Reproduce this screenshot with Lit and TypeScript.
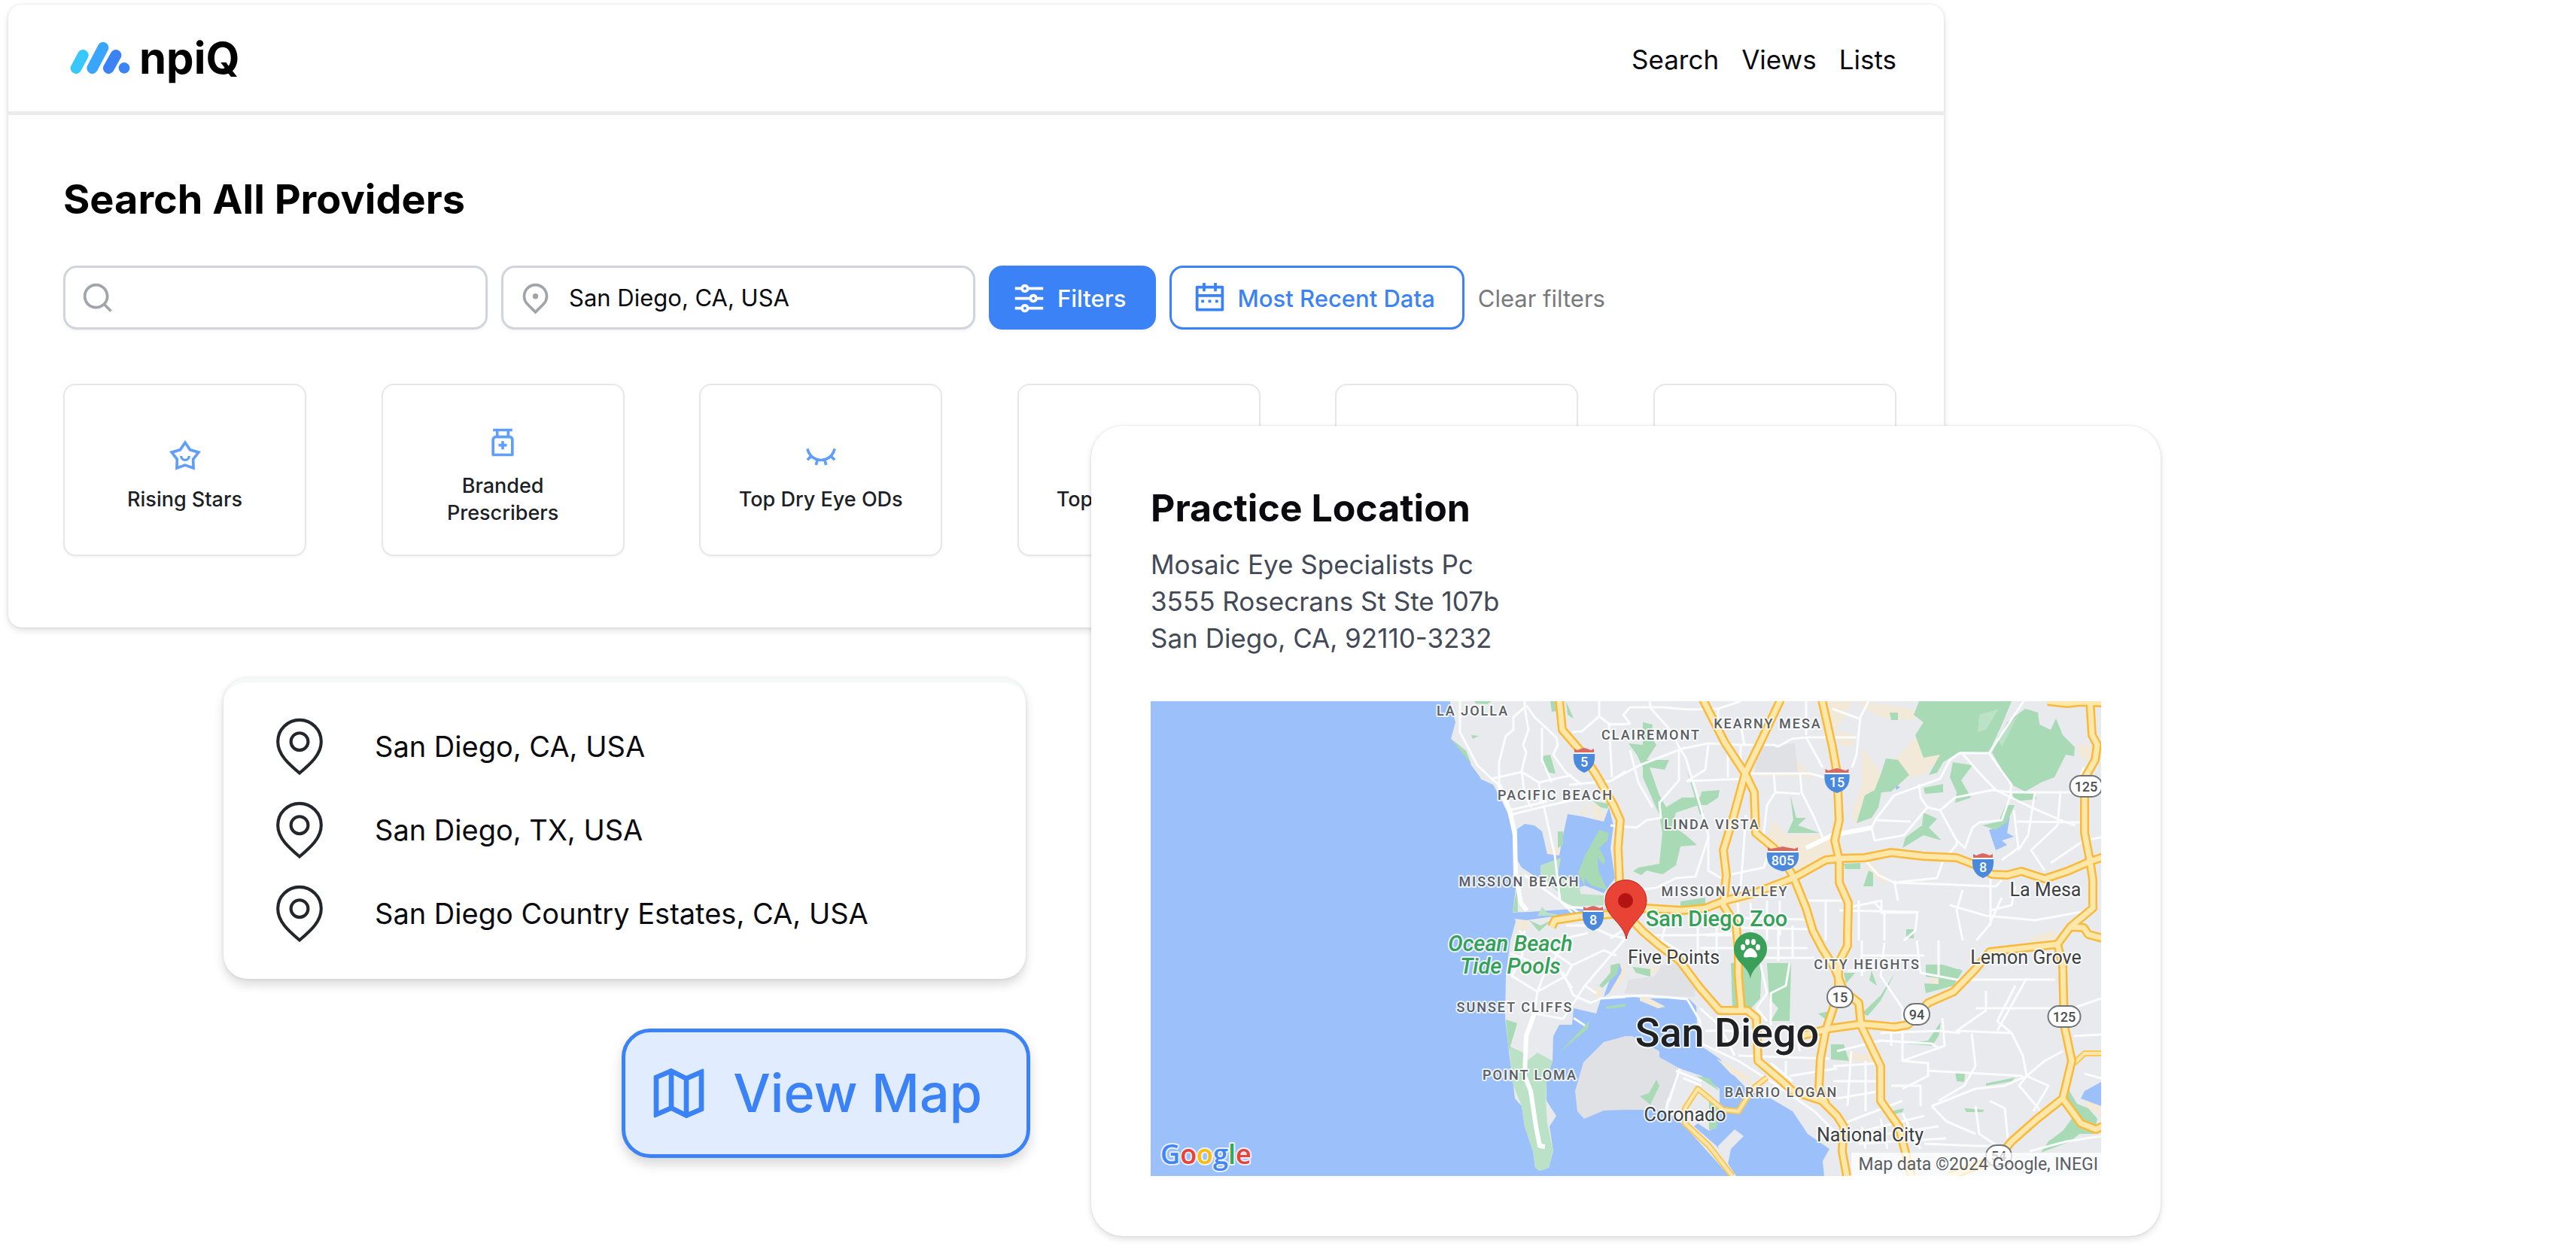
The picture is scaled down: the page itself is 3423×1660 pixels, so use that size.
import { LitElement, html, css, svg } from "lit";
import { customElement } from "lit/decorators.js";

/* ---------- Icons (24-unit grid) ---------- */

const ICONS: Record<string, string> = {
  search:
    "M18.031 16.617l4.283 4.282-1.415 1.415-4.282-4.283A8.96 8.96 0 0 1 11 20c-4.968 0-9-4.032-9-9s4.032-9 9-9 9 4.032 9 9a8.96 8.96 0 0 1-1.969 5.617zm-2.006-.742A6.977 6.977 0 0 0 18 11c0-3.868-3.133-7-7-7-3.868 0-7 3.132-7 7 0 3.867 3.132 7 7 7a6.977 6.977 0 0 0 4.875-1.975l.15-.15z",
  pin: "M12 20.9l4.95-4.95a7 7 0 1 0-9.9 0L12 20.9zm0 2.828l-6.364-6.364a9 9 0 1 1 12.728 0L12 23.728zM12 13a2 2 0 1 1 0-4 2 2 0 0 1 0 4z",
  filters:
    "M6.17 18a3.001 3.001 0 0 1 5.66 0H22v2H11.83a3.001 3.001 0 0 1-5.66 0H2v-2h4.17zm6-7a3.001 3.001 0 0 1 5.66 0H22v2h-4.17a3.001 3.001 0 0 1-5.66 0H2v-2h10.17zm-6-7a3.001 3.001 0 0 1 5.66 0H22v2H11.83a3.001 3.001 0 0 1-5.66 0H2V4h4.17zM9 6a1 1 0 1 0 0-2 1 1 0 0 0 0 2zm6 7a1 1 0 1 0 0-2 1 1 0 0 0 0 2zm-6 7a1 1 0 1 0 0-2 1 1 0 0 0 0 2z",
  calendar:
    "M17 3h4a1 1 0 0 1 1 1v16a1 1 0 0 1-1 1H3a1 1 0 0 1-1-1V4a1 1 0 0 1 1-1h4V1h2v2h6V1h2v2zm3 8H4v8h16v-8zm-5-6H9v2H7V5H4v4h16V5h-3v2h-2V5zm-9 8h2v2H6v-2zm5 0h2v2h-2v-2zm5 0h2v2h-2v-2z",
  map: "M2 5l7-3 6 3 6.303-2.701a.5.5 0 0 1 .697.46V19l-7 3-6-3-6.303 2.701a.5.5 0 0 1-.697-.46V5zm14 14.395l4-1.714V5.033l-4 1.714v12.648zm-2-.131V6.736l-4-2v12.528l4 2zm-6-2.011V4.605L4 6.319v12.648l4-1.714z",
  star: "M12 .5l4.226 6.183 7.187 2.109-4.575 5.93.215 7.486L12 19.69l-7.053 2.518.215-7.486-4.575-5.93 7.187-2.109L12 .5zm0 3.544L9.022 8.402 3.957 9.887l3.225 4.178-.153 5.275L12 17.566l4.97 1.774-.152-5.275 3.224-4.178-5.064-1.485L12 4.044zM10 12a2 2 0 1 0 4 0h1.8a3.8 3.8 0 0 1-7.6 0H10z",
  bottle:
    "M5 2h14v2h-2v3a3 3 0 0 1 3 3v11a1 1 0 0 1-1 1H5a1 1 0 0 1-1-1V10a3 3 0 0 1 3-3V4H5V2zm4 2v3h6V4H9zm-2 5a1 1 0 0 0-1 1v10h12V10a1 1 0 0 0-1-1H7zm4 2h2v2h2v2h-2v2h-2v-2H9v-2h2v-2z",
  eye: "M9.343 18.782l-1.932-.518.787-2.939a10.988 10.988 0 0 1-3.237-1.872l-2.153 2.154-1.415-1.414 2.154-2.154a10.957 10.957 0 0 1-2.371-5.07l1.968-.359C3.903 10.812 7.579 14 12 14c4.42 0 8.097-3.188 8.856-7.39l1.968.358a10.957 10.957 0 0 1-2.37 5.071l2.153 2.154-1.415 1.414-2.153-2.154a10.988 10.988 0 0 1-3.237 1.872l.787 2.94-1.932.517-.788-2.94a11.072 11.072 0 0 1-3.74 0l-.788 2.94z",
};

const icon = (name: string, cls: string) => html`
  <svg class=${cls} viewBox="0 0 24 24" fill="currentColor" aria-hidden="true">
    <path fill-rule="evenodd" d=${ICONS[name]}></path>
  </svg>
`;

/* ---------- Map geometry ---------- */

// A sheet maps its grid onto the 1263 x 631 map.
type Sheet = (d: string) => string;
const sheet =
  (x: number, y: number, kx: number, ky: number): Sheet =>
  (d) =>
    d.replace(/(-?\d+) (-?\d+)/g, (_, a, b) => `${Math.round(x + Number(a) / kx)} ${Math.round(y + Number(b) / ky)}`);

const nw = sheet(-29, -22, 2.376, 3);
const ne = sheet(611, -22, 2.306, 3);
const sw = sheet(-29, 298, 2.376, 3);
const se = sheet(611, 298, 2.063, 3);

const LAND = [
  nw("M1012 60L1030 150L1018 215L1065 265L1080 320L1115 378L1150 400L1170 440L1195 510L1212 590L1216 700L1226 770L1212 905L1222 945"),
  sw("L1205 60L1190 200L1188 370L1200 500L1215 640L1220 690L1240 720L1250 800L1275 900L1282 965L1298 978L1325 965L1340 900L1328 800L1350 760L1318 700L1318 620L1338 540L1340 440L1360 395L1400 395L1405 330L1475 352L1490 295L1568 280"),
  se("L90 290L215 290L235 320L240 470L300 530L340 600L380 660L440 690L500 740L540 830L600 890L582 940L585 998L1345 998"),
  ne("L1503 60Z"),
].join("");

const AIRFIELD = sw("M1568 440L1500 465L1435 545L1408 660L1415 740L1437 772L1500 738L1568 735") + se("L150 735L150 700L190 570L135 525L135 500L60 440Z");
const AIRPORT = se("M50 215L120 205L140 160L190 150L235 220L232 285L100 275L40 270Z");

const CORONADO = [
  se("M190 570L250 600L300 650L300 720L290 800L270 820L240 790L230 800L290 880L345 998L325 998L205 800L150 735L150 700Z"),
  se("M340 812L365 840L330 890L320 970L300 930L295 880Z"),
];

const WATER = [
  nw("M1225 575L1250 556L1280 560L1305 585L1322 675L1358 680L1370 600L1385 515L1430 525L1460 535L1500 545L1515 490L1530 560L1520 650L1535 770L1500 830L1440 800L1400 815L1330 790L1275 760L1240 730L1225 700Z"),
  nw("M1190 908L1262 905L1330 900L1440 890L1520 895L1440 910L1340 925L1255 940L1200 930Z"),
  sw("M1540 150L1555 190L1515 270L1500 285L1510 240Z"),
  ne("M1160 580L1200 560L1225 520L1215 590L1235 605L1200 620L1215 640L1180 660Z"),
  ne("M820 390L832 405L820 418Z"),
  ne("M872 398L888 408L876 420Z"),
  se("M1345 625L1300 660L1290 690L1345 720Z"),
  se("M925 180L960 175L945 205Z"),
  se("M0 200L25 150L30 180L0 240Z"),
];

const SAND = [
  nw("M1105 350L1125 378L1112 378Z"),
  nw("M1440 470L1450 510L1425 525ZM1460 470L1490 480L1495 520L1515 530L1480 542L1465 520Z"),
  nw("M1322 660L1360 640L1358 680L1325 678Z"),
  nw("M1225 940L1265 940L1262 975L1225 990Z"),
  sw("M1470 250L1490 250L1490 285L1470 285ZM1515 270L1540 200L1568 140L1568 200L1530 260Z"),
  ne("M670 65L740 65L720 130L690 180L670 140ZM690 180L750 200L740 250L700 240Z"),
  ne("M760 65L930 100L930 140L830 130L770 90Z"),
  ne("M770 250L800 300L830 360L780 480L750 560L740 500L770 400Z"),
  ne("M940 200L1010 290L960 360L920 370L870 300Z"),
  ne("M500 540L540 600L640 600L700 630L680 700L600 740L560 770L520 700L470 640Z"),
  ne("M440 340L380 360L620 370L570 300Z"),
  ne("M1430 240L1480 240L1480 300L1440 290Z"),
  ne("M310 890L460 850L420 870L330 905Z"),
  ne("M1280 1010L1370 975L1330 1020Z"),
  ne("M790 700L860 790L840 790L780 740Z"),
  se("M80 270L150 325L130 330L80 300Z"),
  se("M60 180L140 160L110 205Z"),
  se("M650 505L720 520L720 545L655 540Z"),
  se("M290 530L380 600L390 640L330 590Z"),
  se("M1295 680L1345 720L1345 760L1300 720Z"),
  se("M870 210L930 205L920 240L880 235Z"),
  se("M1140 60L1215 20L1225 50L1180 75Z"),
];

const FIELD = ne("M455 250L515 240L565 235L575 350L440 350Z");

const PARKS = [
  nw("M1090 65L1145 65L1130 78L1095 75ZM1082 200L1105 205L1085 215ZM1305 285L1330 280L1348 355L1328 350L1308 330Z"),
  nw("M1330 65L1350 65L1350 105L1335 108ZM1380 65L1405 135L1385 120Z"),
  nw("M1018 215L1065 265L1080 315L1065 290Z"),
  nw("M1485 578L1515 590L1510 620L1485 650L1505 700L1500 720L1480 690L1482 740L1510 820L1460 800L1440 770L1438 800L1418 750L1440 680Z"),
  nw("M1355 585L1372 585L1370 640L1355 650ZM1465 465L1515 475L1510 495L1490 490Z"),
  nw("M1265 940L1300 960L1335 940L1295 985ZM1225 800L1228 905L1212 905Z"),
  ne("M100 150L130 160L125 210L140 240L110 300L180 300L165 340L120 330L150 440L170 490L220 450L275 450L280 425L335 420L330 450L295 480L270 480L200 510L190 560L230 600L265 640L215 645L200 720L160 755L110 740L95 760L70 745L85 730L150 715L160 590L150 520L100 370L100 330L80 280L55 235L100 240Z"),
  ne("M945 65L1230 65L1200 160L1160 270L1070 268L1020 310L1000 350L975 360L1010 280L960 290L935 200L960 150L930 120Z"),
  ne("M1215 150L1270 95L1310 110L1315 160L1350 180L1365 135L1385 200L1422 250L1420 285L1395 280L1360 370L1320 390L1270 425L1230 400L1200 340L1170 270Z"),
  ne("M845 295L880 300L915 360L860 425L830 430L820 490L800 530L755 552L780 440L810 420L830 350Z"),
  ne("M855 110L880 110L882 140L860 140Z"),
  ne("M1050 310L1110 320L1075 380L1105 450L1055 470L1060 430L1040 370ZM960 410L1020 395L1020 430L965 435Z"),
  ne("M960 510L1000 535L975 570L1015 620L960 600L895 650L905 610L955 560Z"),
  ne("M1230 430L1300 435L1305 455L1240 465ZM1210 480L1238 480L1215 550L1180 580L1140 560L1190 545Z"),
  ne("M550 440L570 530L600 530L575 560L640 592L542 590L560 540Z"),
  ne("M235 345L285 510L275 520Z"),
  ne("M215 865L290 850L290 880L215 885ZM715 715L765 712L765 735L720 735ZM790 740L805 750L805 805L775 805Z"),
  ne("M906 976L930 976L930 1010L906 1010Z"),
  sw("M1190 375L1225 390L1215 440L1200 500ZM1530 175L1545 190L1495 250L1485 240Z"),
  sw("M1455 380L1450 410L1360 508L1430 410ZM1505 325L1568 312L1568 325L1510 332Z"),
  se("M330 150L415 150L410 290L380 340L360 340L335 330ZM430 150L495 150L490 380L440 380L460 330L435 290Z"),
  se("M0 160L25 150L20 180L0 200ZM60 165L110 175L110 205L70 190Z"),
  se("M640 190L670 190L645 230ZM715 180L730 240L710 220ZM780 190L740 300L705 360L690 350L740 280Z"),
  se("M570 350L610 340L590 375ZM865 155L910 155L965 180L940 240L865 270L860 230L900 235L900 210L865 205Z"),
  se("M605 475L640 475L655 540L605 535ZM905 385L900 440L880 480L810 470L870 460Z"),
  se("M945 585L972 590L970 625L948 620ZM970 730L1025 735L1020 745L975 745ZM1030 630L1110 605L1100 620L1030 640ZM770 740L805 730L800 745L775 752Z"),
  se("M1255 650L1280 710L1310 730L1335 770L1325 830L1285 830L1260 860L1180 905L1200 860L1240 820L1270 760L1240 690Z"),
  se("M80 680L105 670L125 615L135 640L110 715ZM235 600L270 610L300 660ZM270 700L300 730L290 810L270 815Z"),
];

const PARKS_LIGHT = [
  nw("M1300 720L1365 690L1355 760L1420 790L1430 870L1370 880L1360 830L1300 760Z"),
  nw("M1370 830L1500 840L1500 880L1400 885ZM1305 885L1320 910L1370 920L1290 920Z"),
  sw("M1200 480L1250 510L1258 540L1290 508L1338 540L1318 620L1316 700L1320 790L1340 900L1325 965L1298 978L1282 965L1275 900L1250 800L1240 720L1215 640Z"),
];

const PARKS_SHADE = [ne("M1130 120L1190 95L1150 180L1125 190Z"), ne("M1250 120L1200 250L1185 210Z")];

const STREETS = [
  nw("M1045 65L1045 190L1100 320L1145 375L1170 400L1170 310L1190 205L1215 180L1215 130L1250 90L1250 65"),
  nw("M1250 90L1262 180L1245 240L1255 270L1240 345L1250 440L1270 490"),
  nw("M1255 80L1280 130L1350 210L1355 240L1340 280L1380 350L1430 400M1305 170L1305 300L1335 390"),
  nw("M1145 375L1240 348L1295 390L1400 360M1295 390L1300 470"),
  nw("M1400 190L1430 185L1485 125L1485 65M1485 125L1515 155L1568 160M1515 155L1525 370M1390 400L1520 385L1568 345"),
  nw("M1200 500L1320 465M1205 520L1310 485L1440 450"),
  nw("M1310 480L1345 680L1362 860L1400 910M1250 760L1362 860L1420 910L1340 940M1380 885L1440 890"),
  nw("M1450 960L1520 1000L1568 1010M1380 960L1450 960"),
  sw("M1230 20L1270 60L1330 100L1400 160L1500 100L1540 120M1250 20L1240 130L1210 200L1290 265L1380 200L1400 160M1568 50L1440 240L1405 310M1290 265L1310 200L1380 60"),
  sw("M1205 110L1300 160L1370 190L1405 280L1460 310L1490 290L1568 285M1440 240L1475 270M1290 265L1280 350L1370 372L1405 310M1330 130L1400 250M1310 100L1350 60L1450 30"),
  sw("M1405 370L1440 400"),
  ne("M-10 160L60 155L40 120L60 90L160 90L240 100L330 95L400 65M0 385L90 320L220 255L300 235L400 240L500 240L515 245L555 215L600 210L755 210"),
  ne("M120 65L125 95L190 190L210 250L230 290L280 500L300 600L300 740L340 770M210 260L210 380L150 470L155 530L110 540L80 570L0 560M60 260L85 390L130 490"),
  ne("M300 240L290 340L235 385L420 375M360 370L360 260M400 245L400 370M430 355L610 355L655 370M600 210L650 330M680 95L760 135M600 65L600 200M400 160L410 240M330 160L330 95"),
  ne("M790 65L765 130L755 280L740 330M500 355L505 430L480 480L465 640M580 355L585 430L625 530L650 610M505 430L580 435"),
  ne("M400 800L405 690L415 520M140 810L200 770L260 765L300 610M360 760L470 730L480 690"),
  ne("M800 570L815 535L870 440L1010 375L1040 300L1070 272L1160 272L1265 65M1160 272L1200 345L1228 400L1225 425M1080 275L1130 350L1180 420L1290 490L1390 545L1425 560"),
  ne("M945 395L950 450L970 490L900 600L810 620L800 570M970 490L1010 500L1055 450L1170 420L1228 430L1450 430M1010 500L1060 620L1060 640L1020 700L1000 770L870 790L820 760L780 700"),
  ne("M815 540L920 545M1060 620L1085 650L1110 570L1130 550L1200 540L1228 430M1235 500L1250 650L1200 700M1245 545L1450 550M1300 430L1280 600L1250 660M1380 430L1370 560L1290 660L1330 740M1450 330L1425 400M1503 610L1450 620L1350 710"),
  ne("M0 830L140 810M720 890L830 860L830 910L940 910M760 860L760 1020M810 870L840 910L840 1020M660 860L660 1020M600 860L720 860M700 900L940 905L935 980L900 1020"),
  ne("M870 790L1180 805L1200 780M1080 820L1060 900L1080 1020M1165 740L1165 960M1240 800L1230 880L1165 900M1200 850L1160 960L1120 1020M870 780L880 860M1040 880L1150 920L1300 940L1470 900"),
  ne("M390 870L395 960M430 870L435 1020M480 860L480 1020M520 860L520 1000M390 930L600 935M400 970L610 975M0 1010L50 970M100 1000L250 1000L390 990"),
  se("M0 285L100 280L210 295L245 380L250 470L350 540L440 620L560 740M245 330L300 400L340 520M300 360L290 500M260 420L400 420M350 520L600 530M440 550L500 620M480 540L480 640"),
  se("M150 0L140 60L200 110L210 150M240 0L240 130M260 40L400 40M245 90L540 90M290 0L290 150M460 0L460 140M500 0L500 130M400 130L560 130M410 150L430 270L400 330L430 380M490 150L480 240L440 270L440 400"),
  se("M180 580L250 620M190 570L160 700M200 610L250 640M160 690L150 740"),
  se("M500 390L520 500M620 500L740 460L880 470L900 490M610 560L740 550M610 620L740 620M620 690L740 660M660 500L650 720M700 540L700 740"),
  se("M650 180L700 180M690 60L690 200M750 70L740 200L800 330L800 540M690 120L860 120M840 60L850 190L950 215L1220 215M900 60L900 200M770 380L770 480M740 430L900 420L960 430"),
  se("M910 370L915 480L800 540L870 550L870 600L800 650M990 430L1000 560L970 640L900 700M1030 260L1030 340L950 420L1100 430L1130 520L1140 600M1110 240L1060 380L1100 430"),
  se("M1140 210L1060 420M1000 330L1240 330M1345 290L1250 340M1270 440L1345 435M1140 600L1190 540L1240 500M1140 600L1080 640L1000 650L880 720M1140 600L1200 640L1160 740M1140 600L1120 640L1190 760"),
  se("M870 580L1130 600M770 640L850 640L850 720M1000 720L1010 830L1060 880M880 720L920 780L1000 830M660 830L860 760M670 850L900 800M680 870L920 850M690 800L700 890M740 770L760 890M800 750L850 890M640 790L800 700M860 870L1000 880L1100 880"),
  se("M1040 700L1080 730L1090 850M1300 590L1345 610M1150 900L1250 860L1345 840M560 740L620 830M490 600L620 570"),
];

const BOULEVARDS = [
  nw("M1170 400L1205 510L1218 600L1222 760L1238 870L1258 900"),
  sw("M1280 350L1255 440L1250 600L1268 660L1285 800L1298 880L1315 882"),
  ne("M600 650L680 600L800 570"),
];

const FREEWAYS = [
  nw("M1360 60L1368 180L1430 270L1480 370L1530 480L1552 540L1545 650L1550 780") + ne("L60 930L100 985") +
    se("L130 75L190 140L245 250L300 340L375 340L400 370L405 540L470 620L500 660L580 700L620 760L640 800L635 900L648 1000"),
  ne("M283 60L350 230L412 355L440 430L445 590L500 650L530 700L560 765L600 890L620 980") +
    se("L580 90L615 170L640 260L680 310L688 400L740 560L740 700L790 800L825 1000"),
  ne("M522 60L460 230L412 355L375 530L345 660L355 760L345 880L385 960") + se("L350 100L350 200L358 340"),
  ne("M648 60L680 250L695 350L702 540L688 620L702 700L702 790L728 870L726 1000") +
    se("L650 80L625 150L625 240L610 330L590 420L575 530L572 650L590 710"),
  nw("M1335 965L1345 940L1420 925L1530 915") +
    ne("L110 890L220 900L290 890L350 860L440 830L560 770L660 700L702 693L780 690L860 670L960 685L1060 690L1120 720L1170 755L1215 760L1260 745L1330 775L1400 745L1470 705L1510 688"),
  ne("M1470 60L1475 200L1492 240L1485 300L1455 370L1452 450L1452 590L1470 700L1478 780L1478 890L1410 965") +
    se("L1225 75L1240 160L1243 400L1265 540L1240 690L1170 770L1100 860L1060 930L1000 960L930 1000"),
  ne("M1340 67L1400 76L1440 70L1510 72"),
  ne("M1410 965L1450 970") + se("L1310 35L1350 52"),
  se("M520 440L600 410L690 392L780 405L815 395L870 310L940 265L1000 175L1040 105L1130 90L1225 75"),
  se("M1240 690L1290 790L1330 812L1350 800"),
];

const RAMPS = [
  se("M430 605L390 650L350 740L310 735L240 650L205 730L205 790L270 880L335 1000"),
  se("M1270 550L1300 510L1350 510"),
];

type Label = [text: string, x: number, y: number];

const DISTRICTS: Label[] = [
  ["LA JOLLA", 428, 19],
  ["CLAIREMONT", 665, 51],
  ["KEARNY MESA", 820, 36],
  ["PACIFIC BEACH", 538, 131],
  ["LINDA VISTA", 746, 170],
  ["MISSION BEACH", 490, 246],
  ["MISSION VALLEY", 763, 259],
  ["SUNSET CLIFFS", 484, 413],
  ["POINT LOMA", 504, 503],
  ["CITY HEIGHTS", 952, 356],
  ["BARRIO LOGAN", 838, 526],
];

const TOWNS: Label[] = [
  ["La Mesa", 1189, 259],
  ["Lemon Grove", 1163, 349],
  ["Five Points", 695, 349],
  ["Coronado", 710, 558],
  ["National City", 956, 585],
];

const PLACES: Label[] = [
  ["Ocean Beach", 478, 332],
  ["Tide Pools", 478, 362],
];

const INTERSTATES: [label: string, x: number, y: number, w: number][] = [
  ["5", 576, 62, 28],
  ["15", 912, 89, 33],
  ["805", 840, 193, 42],
  ["8", 1106, 202, 28],
  ["8", 588, 272, 28],
];

const STATE_ROUTES: [label: string, x: number, y: number, w: number][] = [
  ["125", 1243, 113, 43],
  ["15", 916, 393, 34],
  ["94", 1018, 416, 34],
  ["125", 1214, 419, 43],
  ["54", 1127, 604, 34],
];

const fillAll = (cls: string, list: string[]) => list.map((d) => svg`<path class=${cls} d=${d}></path>`);
const labels = (cls: string, list: Label[]) => list.map(([t, x, y]) => svg`<text class=${cls} x=${x} y=${y}>${t}</text>`);

const interstate = (label: string, x: number, y: number, w: number) => {
  const l = x - w / 2;
  const r = x + w / 2;
  return svg`
    <path fill="#d96a61" d="M${l + 1} ${y + 6}V${y + 1}L${l + 5} ${y + 3}L${x - 4} ${y + 1}L${x} ${y}L${x + 4} ${y + 1}L${r - 5} ${y + 3}L${r - 1} ${y + 1}V${y + 6}Z"></path>
    <path fill="#fff" d="M${l + 1} ${y + 6}H${r - 1}V${y + 9}H${l + 1}Z"></path>
    <path fill="#4a89dc" d="M${l} ${y + 8}H${r}C${r + 1} ${y + 22} ${r - 4} ${y + 29} ${x} ${y + 33}C${l + 4} ${y + 29} ${l - 1} ${y + 22} ${l} ${y + 8}Z"></path>
    <text class="route-light" x=${x} y=${y + 25}>${label}</text>
  `;
};

const stateRoute = (label: string, x: number, y: number, w: number) => svg`
  <rect x=${x - w / 2} y=${y - 14} width=${w} height="28" rx="14" fill="#fff" stroke="#70757a" stroke-width="2"></rect>
  <text class="route-dark" x=${x} y=${y + 7}>${label}</text>
`;

@customElement("location-map")
export class LocationMap extends LitElement {
  static styles = css`
    :host {
      display: block;
    }
    .map {
      display: block;
      width: 100%;
      height: auto;
      font-family: Roboto, "Liberation Sans", sans-serif;
    }
    .land {
      fill: #e8eaed;
    }
    .built {
      fill: #dfe1e5;
    }
    .sand {
      fill: #f2e9d8;
    }
    .park {
      fill: #a8dab5;
    }
    .park-light {
      fill: #bbe2c6;
    }
    .water {
      fill: #9cc0f9;
    }
    .street,
    .boulevard,
    .casing,
    .freeway,
    .ramp-casing,
    .ramp {
      fill: none;
      stroke-linejoin: round;
    }
    .street {
      stroke: #fbfcfd;
      stroke-width: 3px;
    }
    .boulevard {
      stroke: #ffffff;
      stroke-width: 6px;
    }
    .casing {
      stroke: #f9b93a;
      stroke-width: 12px;
    }
    .freeway {
      stroke: #ffe6a9;
      stroke-width: 7px;
    }
    .ramp-casing {
      stroke: #f9c65c;
      stroke-width: 8px;
    }
    .ramp {
      stroke: #ffe6a9;
      stroke-width: 4px;
    }
    text {
      text-anchor: middle;
      paint-order: stroke;
      stroke: rgba(255, 255, 255, 0.8);
      stroke-width: 4px;
      stroke-linejoin: round;
    }
    .district {
      font-size: 18px;
      font-weight: 500;
      letter-spacing: 2px;
      fill: #5a5e64;
    }
    .town {
      font-size: 25px;
      fill: #3c4043;
    }
    .city {
      font-size: 54px;
      font-weight: 500;
      fill: #202124;
    }
    .place {
      font-size: 29px;
      font-style: italic;
      font-weight: 500;
      fill: #34a058;
    }
    .zoo {
      font-size: 29px;
      font-weight: 500;
      fill: #34a058;
    }
    .route-light {
      font-size: 18px;
      font-weight: 500;
      fill: #ffffff;
      stroke: none;
    }
    .route-dark {
      font-size: 18px;
      font-weight: 500;
      fill: #4a4d51;
      stroke: none;
    }
    .brand {
      font-family: "Open Sans", Roboto, sans-serif;
      font-size: 36px;
      font-weight: 600;
      text-anchor: start;
    }
    .blue {
      fill: #4285f4;
    }
    .red {
      fill: #ea4335;
    }
    .yellow {
      fill: #fbbc04;
    }
    .green {
      fill: #34a853;
    }
    .credit {
      font-size: 23px;
      text-anchor: end;
      fill: #5a5e63;
      stroke: none;
    }
  `;

  render() {
    return html`
      <svg class="map" viewBox="0 0 1263 631" role="img" aria-label="Map of San Diego">
        <rect class="water" width="1263" height="631"></rect>
        <path class="land" d=${LAND}></path>
        ${fillAll("land", CORONADO)}
        <path class="built" d=${AIRFIELD}></path>
        <path class="built" d=${AIRPORT}></path>
        ${fillAll("sand", SAND)}
        <path class="built" d=${FIELD}></path>
        ${fillAll("water", WATER)} ${fillAll("park-light", PARKS_LIGHT)} ${fillAll("park", PARKS)}
        ${fillAll("park-light", PARKS_SHADE)}
        ${fillAll("street", STREETS)} ${fillAll("boulevard", BOULEVARDS)}
        ${fillAll("ramp-casing", RAMPS)} ${fillAll("ramp", RAMPS)}
        ${fillAll("casing", FREEWAYS)} ${fillAll("freeway", FREEWAYS)}
        ${INTERSTATES.map((s) => interstate(...s))} ${STATE_ROUTES.map((s) => stateRoute(...s))}
        ${labels("district", DISTRICTS)} ${labels("town", TOWNS)} ${labels("place", PLACES)}
        ${labels("zoo", [["San Diego Zoo", 752, 299]])} ${labels("city", [["San Diego", 766, 459]])}

        <path fill="#3a9f58" d="M797 369C795 352 775 347 775 329A22 22 0 0 1 819 329C819 347 799 352 797 369Z"></path>
        <g fill="#fff">
          <ellipse cx="787" cy="327" rx="3" ry="4"></ellipse>
          <ellipse cx="793" cy="320" rx="3" ry="4"></ellipse>
          <ellipse cx="801" cy="320" rx="3" ry="4"></ellipse>
          <ellipse cx="807" cy="327" rx="3" ry="4"></ellipse>
          <path d="M797 328C801 328 806 334 806 338C806 342 801 340 797 340C793 340 788 342 788 338C788 334 793 328 797 328Z"></path>
        </g>
        <path
          fill="#e94335"
          stroke="#b9281d"
          stroke-width="1"
          d="M632 316C629 295 604 286 604 265A27 27 0 0 1 659 265C659 286 635 295 632 316Z"
        ></path>
        <circle cx="631" cy="265" r="10" fill="#b31412"></circle>

        <text class="brand" x="13" y="615">
          <tspan class="blue">G</tspan><tspan class="red">o</tspan><tspan class="yellow">o</tspan><tspan class="blue">g</tspan><tspan class="green">l</tspan><tspan class="red">e</tspan>
        </text>
        <rect x="931" y="600" width="332" height="31" fill="#fff" opacity="0.75"></rect>
        <text class="credit" x="1259" y="623">Map data ©2024 Google, INEGI</text>
      </svg>
    `;
  }
}

type Category = { icon?: string; label?: string; start?: boolean };

const CATEGORIES: Category[] = [
  { icon: "star", label: "Rising Stars" },
  { icon: "bottle", label: "Branded Prescribers" },
  { icon: "eye", label: "Top Dry Eye ODs" },
  { label: "Top", start: true },
  {},
  {},
];

const SUGGESTIONS = ["San Diego, CA, USA", "San Diego, TX, USA", "San Diego Country Estates, CA, USA"];

@customElement("app-root")
export class AppRoot extends LitElement {
  static styles = css`
    :host {
      display: block;
      background: #ffffff;
      color: #0b0b0f;
      font-family: Inter, "Liberation Sans", sans-serif;
    }
    * {
      box-sizing: border-box;
    }
    h1,
    h2,
    ul,
    address {
      margin: 0;
      padding: 0;
      font-style: normal;
    }
    button,
    input {
      font: inherit;
      color: inherit;
    }
    button {
      cursor: pointer;
    }

    /* The search panel and the practice panel share the 268px middle row. */
    .page {
      display: grid;
      grid-template-columns: minmax(0, 1439fr) minmax(0, 1133fr) minmax(0, 288fr) minmax(0, 552fr);
      grid-template-rows: auto 268px auto;
      padding: 6px 0 16px 11px;
    }
    .panel {
      background: #ffffff;
      box-shadow:
        0 4px 10px rgba(0, 0, 0, 0.12),
        0 0 3px rgba(0, 0, 0, 0.12);
    }

    .search-panel {
      grid-area: 1 / 1 / 3 / 3;
      border-radius: 18px;
    }
    .header {
      display: flex;
      align-items: center;
      justify-content: space-between;
      height: 147px;
      padding: 0 63px 0 82px;
      border-bottom: 5px solid #ebebeb;
    }
    .logo {
      display: flex;
      align-items: center;
      gap: 12px;
      color: #000000;
      text-decoration: none;
      font-size: 58px;
      line-height: 60px;
      font-weight: 700;
    }
    .logo-mark {
      width: 80px;
      height: 42px;
    }
    .nav {
      display: flex;
      gap: 30px;
      padding-top: 4px;
      font-size: 35px;
      line-height: 48px;
    }
    .nav-link {
      color: inherit;
      text-decoration: none;
    }
    .search-body {
      padding: 76px 63px 95px 73px;
    }
    .title {
      font-size: 54px;
      line-height: 72px;
      font-weight: 700;
      color: #000000;
    }
    .toolbar {
      display: flex;
      align-items: stretch;
      gap: 18px;
      height: 85px;
      margin-top: 52px;
      font-size: 31px;
    }
    .field {
      display: flex;
      align-items: center;
      gap: 22px;
      flex: 0 1 564px;
      min-width: 0;
      padding: 0 20px;
      border: 3px solid #d1d5db;
      border-radius: 18px;
      background: #ffffff;
      box-shadow: 0 2px 4px rgba(0, 0, 0, 0.05);
    }
    .field-wide {
      flex-basis: 630px;
    }
    .field-input {
      flex: 1;
      min-width: 0;
      padding: 0;
      border: 0;
      outline: 0;
      background: transparent;
    }
    .icon-gray {
      flex: none;
      width: 45px;
      height: 45px;
      color: #a1a5a9;
    }
    .icon-button {
      flex: none;
      width: 45px;
      height: 45px;
    }
    .button {
      display: flex;
      align-items: center;
      gap: 15px;
      padding: 2px 36px 0 28px;
      border: 3px solid #3b82f6;
      border-radius: 18px;
      background: #ffffff;
      color: #3b82f6;
      font-weight: 500;
      white-space: nowrap;
      box-shadow: 0 2px 4px rgba(0, 0, 0, 0.06);
    }
    .button-primary {
      background: #3b82f6;
      color: #ffffff;
    }
    .button-text {
      padding: 2px 0 0;
      border: 0;
      background: none;
      color: #77797d;
      white-space: nowrap;
    }
    .cards {
      display: flex;
      justify-content: space-between;
      gap: 16px;
      margin-top: 72px;
      list-style: none;
    }
    .card {
      display: flex;
      flex: 0 1 323px;
      flex-direction: column;
      align-items: center;
      justify-content: center;
      min-height: 229px;
      padding: 16px 50px 0;
      border: 2px solid #e5e7e9;
      border-radius: 16px;
      background: #ffffff;
      box-shadow: 0 2px 3px rgba(0, 0, 0, 0.04);
      font-size: 27px;
      line-height: 36px;
      font-weight: 500;
      color: #1c1f26;
      text-align: center;
    }
    .card-start {
      align-items: flex-start;
    }
    .icon-card {
      width: 44px;
      height: 44px;
      margin-bottom: 18px;
      color: #609efb;
    }

    .practice-panel {
      grid-area: 2 / 2 / 4 / 4;
      z-index: 1;
      padding: 79px 79px 80px;
      border-radius: 42px;
    }
    .practice-title {
      font-size: 50px;
      line-height: 60px;
      font-weight: 700;
    }
    .address {
      margin: 21px 0 59px;
      font-size: 35px;
      line-height: 49px;
      color: #434956;
    }
    .address-line {
      display: block;
    }

    .side {
      grid-area: 3 / 1 / 4 / 2;
      display: flex;
      flex-direction: column;
      align-items: flex-end;
      gap: 66px;
      padding: 67px 81px 0 286px;
    }
    .suggestions {
      align-self: stretch;
      margin-right: 6px;
      padding: 29px 32px 32px;
      border-top: 6px solid #f7f9f9;
      border-radius: 32px;
      list-style: none;
      font-size: 38px;
      line-height: 48px;
      box-shadow:
        0 8px 14px rgba(0, 0, 0, 0.14),
        0 0 4px rgba(0, 0, 0, 0.1);
    }
    .suggestion {
      display: flex;
      align-items: center;
      gap: 62px;
      width: 100%;
      height: 111px;
      padding: 0 0 0 31px;
      border: 0;
      background: none;
      text-align: left;
    }
    .icon-pin {
      flex: none;
      width: 76px;
      height: 76px;
      color: #24262b;
    }
    .map-button {
      display: flex;
      align-items: center;
      gap: 32px;
      padding: 41px 59px 41px 31px;
      border: 5px solid #3b82f6;
      border-radius: 38px;
      background: #e1edfe;
      color: #3b82f6;
      font-size: 70px;
      line-height: 80px;
      font-weight: 500;
      white-space: nowrap;
      box-shadow: 0 8px 16px rgba(0, 0, 0, 0.16);
    }
    .icon-map {
      width: 80px;
      height: 80px;
    }
  `;

  private renderHeader() {
    return html`
      <header class="header">
        <a class="logo" href="#home">
          <svg class="logo-mark" viewBox="38 42 240 126" aria-hidden="true" fill="none" stroke-linecap="round" stroke-width="44">
            <path stroke="#38c8ff" d="M90 94L62 146"></path>
            <path stroke="#3aa6fb" d="M170 64L127 146"></path>
            <path stroke="#3b82f6" d="M221 94L192 146"></path>
            <circle cx="254" cy="145" r="22" fill="#3b82f6" stroke="none"></circle>
          </svg>
          <span>npiQ</span>
        </a>
        <nav class="nav">
          <a class="nav-link" href="#search">Search</a>
          <a class="nav-link" href="#views">Views</a>
          <a class="nav-link" href="#lists">Lists</a>
        </nav>
      </header>
    `;
  }

  private renderToolbar() {
    return html`
      <div class="toolbar">
        <label class="field">
          ${icon("search", "icon-gray")}
          <input class="field-input" type="text" aria-label="Search providers" />
        </label>
        <label class="field field-wide">
          ${icon("pin", "icon-gray")}
          <input class="field-input" type="text" aria-label="Location" value="San Diego, CA, USA" />
        </label>
        <button class="button button-primary" type="button">${icon("filters", "icon-button")} Filters</button>
        <button class="button" type="button">${icon("calendar", "icon-button")} Most Recent Data</button>
        <button class="button-text" type="button">Clear filters</button>
      </div>
    `;
  }

  private renderCard(c: Category) {
    return html`
      <li class="card ${c.start ? "card-start" : ""}">
        ${c.label ? (c.icon ? icon(c.icon, "icon-card") : html`<span class="icon-card"></span>`) : ""}
        <span>${c.label ?? ""}</span>
      </li>
    `;
  }

  render() {
    return html`
      <div class="page">
        <section class="panel search-panel">
          ${this.renderHeader()}
          <div class="search-body">
            <h1 class="title">Search All Providers</h1>
            ${this.renderToolbar()}
            <ul class="cards">
              ${CATEGORIES.map((c) => this.renderCard(c))}
            </ul>
          </div>
        </section>

        <section class="panel practice-panel">
          <h2 class="practice-title">Practice Location</h2>
          <address class="address">
            <span class="address-line">Mosaic Eye Specialists Pc</span>
            <span class="address-line">3555 Rosecrans St Ste 107b</span>
            <span class="address-line">San Diego, CA, 92110-3232</span>
          </address>
          <location-map></location-map>
        </section>

        <div class="side">
          <ul class="panel suggestions">
            ${SUGGESTIONS.map(
              (s) => html`
                <li>
                  <button class="suggestion" type="button">
                    <svg class="icon-pin" viewBox="0 0 24 24" fill="none" stroke="currentColor" stroke-width="1.3" aria-hidden="true">
                      <path d="M21.1 10c0 5.4-4.6 9.4-9.1 13.2c-4.5-3.8-9.1-7.8-9.1-13.2a9.1 9.1 0 0 1 18.2 0z"></path>
                      <circle cx="12" cy="10" r="3.6"></circle>
                    </svg>
                    ${s}
                  </button>
                </li>
              `,
            )}
          </ul>
          <button class="map-button" type="button">${icon("map", "icon-map")} View Map</button>
        </div>
      </div>
    `;
  }
}
